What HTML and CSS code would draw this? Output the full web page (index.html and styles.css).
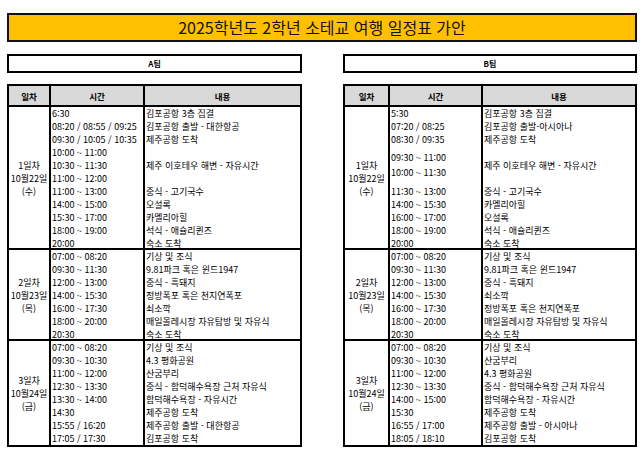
FILE: index.html
```html
<!DOCTYPE html>
<html lang="ko">
<head>
<meta charset="utf-8">
<title>2025학년도 2학년 소테교 여행 일정표 가안</title>
<link rel="stylesheet" href="styles.css">
</head>
<body>
<div class="page">
  <div class="title">2025학년도 2학년 소테교 여행 일정표 가안</div>

  <div class="teams">
    <div class="team">A팀</div>
    <div class="team">B팀</div>
  </div>

  <div class="tables">
    <!-- A team -->
    <div class="sched sched-a">
      <div class="row head">
        <div class="c-day">일차</div>
        <div class="c-time">시간</div>
        <div class="c-desc">내용</div>
      </div>
      <div class="row day">
        <div class="c-day label">1일차<br>10월22일<br>(수)</div>
        <div class="c-time lines">
          <div class="ln">6:30</div>
          <div class="ln">08:20 / 08:55 / 09:25</div>
          <div class="ln">09:30 / 10:05 / 10:35</div>
          <div class="ln">10:00 ~ 11:00</div>
          <div class="ln">10:30 ~ 11:30</div>
          <div class="ln">11:00 ~ 12:00</div>
          <div class="ln">11:00 ~ 13:00</div>
          <div class="ln">14:00 ~ 15:00</div>
          <div class="ln">15:30 ~ 17:00</div>
          <div class="ln">18:00 ~ 19:00</div>
          <div class="ln">20:00</div>
        </div>
        <div class="c-desc lines">
          <div class="ln">김포공항 3층 집결</div>
          <div class="ln">김포공항 출발 - 대한항공</div>
          <div class="ln">제주공항 도착</div>
          <div class="blk3"><div class="ln">제주 이호테우 해변 - 자유시간</div></div>
          <div class="ln">중식 - 고기국수</div>
          <div class="ln">오설록</div>
          <div class="ln">카멜리아힐</div>
          <div class="ln">석식 - 애슐리퀸즈</div>
          <div class="ln">숙소 도착</div>
        </div>
      </div>
      <div class="row day">
        <div class="c-day label">2일차<br>10월23일<br>(목)</div>
        <div class="c-time lines">
          <div class="ln">07:00 ~ 08:20</div>
          <div class="ln">09:30 ~ 11:30</div>
          <div class="ln">12:00 ~ 13:00</div>
          <div class="ln">14:00 ~ 15:30</div>
          <div class="ln">16:00 ~ 17:30</div>
          <div class="ln">18:00 ~ 20:00</div>
          <div class="ln">20:30</div>
        </div>
        <div class="c-desc lines">
          <div class="ln">기상 및 조식</div>
          <div class="ln">9.81파크 혹은 윈드1947</div>
          <div class="ln">중식 - 흑돼지</div>
          <div class="ln">정방폭포 혹은 천지연폭포</div>
          <div class="ln">쇠소깍</div>
          <div class="ln">매일올레시장 자유탐방 및 자유식</div>
          <div class="ln">숙소 도착</div>
        </div>
      </div>
      <div class="row day">
        <div class="c-day label">3일차<br>10월24일<br>(금)</div>
        <div class="c-time lines">
          <div class="ln">07:00 ~ 08:20</div>
          <div class="ln">09:30 ~ 10:30</div>
          <div class="ln">11:00 ~ 12:00</div>
          <div class="ln">12:30 ~ 13:30</div>
          <div class="ln">13:30 ~ 14:00</div>
          <div class="ln">14:30</div>
          <div class="ln">15:55 / 16:20</div>
          <div class="ln">17:05 / 17:30</div>
        </div>
        <div class="c-desc lines">
          <div class="ln">기상 및 조식</div>
          <div class="ln">4.3 평화공원</div>
          <div class="ln">산굼부리</div>
          <div class="ln">중식 - 함덕해수욕장 근처 자유식</div>
          <div class="ln">함덕해수욕장 - 자유시간</div>
          <div class="ln">제주공항 도착</div>
          <div class="ln">제주공항 출발 - 대한항공</div>
          <div class="ln">김포공항 도착</div>
        </div>
      </div>
    </div>

    <!-- B team -->
    <div class="sched sched-b">
      <div class="row head">
        <div class="c-day">일차</div>
        <div class="c-time">시간</div>
        <div class="c-desc">내용</div>
      </div>
      <div class="row day">
        <div class="c-day label">1일차<br>10월22일<br>(수)</div>
        <div class="c-time lines">
          <div class="ln">5:30</div>
          <div class="ln">07:20 / 08:25</div>
          <div class="ln">08:30 / 09:35</div>
          <div class="blk3 split">
            <div class="ln">09:30 ~ 11:00</div>
            <div class="ln">10:00 ~ 11:30</div>
          </div>
          <div class="ln">11:30 ~ 13:00</div>
          <div class="ln">14:00 ~ 15:30</div>
          <div class="ln">16:00 ~ 17:00</div>
          <div class="ln">18:00 ~ 19:00</div>
          <div class="ln">20:00</div>
        </div>
        <div class="c-desc lines">
          <div class="ln">김포공항 3층 집결</div>
          <div class="ln">김포공항 출발-아시아나</div>
          <div class="ln">제주공항 도착</div>
          <div class="blk3"><div class="ln">제주 이호테우 해변 - 자유시간</div></div>
          <div class="ln">중식 - 고기국수</div>
          <div class="ln">카멜리아힐</div>
          <div class="ln">오설록</div>
          <div class="ln">석식 - 애슐리퀸즈</div>
          <div class="ln">숙소 도착</div>
        </div>
      </div>
      <div class="row day">
        <div class="c-day label">2일차<br>10월23일<br>(목)</div>
        <div class="c-time lines">
          <div class="ln">07:00 ~ 08:20</div>
          <div class="ln">09:30 ~ 11:30</div>
          <div class="ln">12:00 ~ 13:00</div>
          <div class="ln">14:00 ~ 15:30</div>
          <div class="ln">16:00 ~ 17:30</div>
          <div class="ln">18:00 ~ 20:00</div>
          <div class="ln">20:30</div>
        </div>
        <div class="c-desc lines">
          <div class="ln">기상 및 조식</div>
          <div class="ln">9.81파크 혹은 윈드1947</div>
          <div class="ln">중식 - 흑돼지</div>
          <div class="ln">쇠소깍</div>
          <div class="ln">정방폭포 혹은 천지연폭포</div>
          <div class="ln">매일올레시장 자유탐방 및 자유식</div>
          <div class="ln">숙소 도착</div>
        </div>
      </div>
      <div class="row day">
        <div class="c-day label">3일차<br>10월24일<br>(금)</div>
        <div class="c-time lines">
          <div class="ln">07:00 ~ 08:20</div>
          <div class="ln">09:30 ~ 10:30</div>
          <div class="ln">11:00 ~ 12:00</div>
          <div class="ln">12:30 ~ 13:30</div>
          <div class="ln">14:00 ~ 15:00</div>
          <div class="ln">15:30</div>
          <div class="ln">16:55 / 17:00</div>
          <div class="ln">18:05 / 18:10</div>
        </div>
        <div class="c-desc lines">
          <div class="ln">기상 및 조식</div>
          <div class="ln">산굼부리</div>
          <div class="ln">4.3 평화공원</div>
          <div class="ln">중식 - 함덕해수욕장 근처 자유식</div>
          <div class="ln">함덕해수욕장 - 자유시간</div>
          <div class="ln">제주공항 도착</div>
          <div class="ln">제주공항 출발 - 아시아나</div>
          <div class="ln">김포공항 도착</div>
        </div>
      </div>
    </div>
  </div>
</div>
</body>
</html>
```

FILE: styles.css
```css
* { box-sizing: border-box; }

html, body {
  margin: 0;
  padding: 0;
  background: #fff;
}

body {
  font-family: "Noto Sans CJK KR", "Noto Sans", sans-serif;
  color: #000;
}

.page {
  padding: 13px 6px 0 7px;
  width: 643px;
}

.title {
  height: 29px;
  background: #ffc000;
  border: 2px solid #111;
  font-size: 16px;
  line-height: 25px;
  text-align: center;
  color: #111;
}

.teams,
.tables {
  display: grid;
  grid-template-columns: 295px 294px;
  column-gap: 41px;
}

.teams {
  margin-top: 12px;
}

.team {
  height: 19px;
  border: 2px solid #000;
  font-size: 8px;
  font-weight: 700;
  line-height: 15px;
  text-align: center;
}

.tables {
  margin-top: 11px;
  align-items: start;
}

.sched {
  border: 2px solid #000;
  font-size: 9px;
}

.sched-a { --cols: 40px 94px 1fr; }
.sched-b { --cols: 43px 93px 1fr; }

.row {
  display: grid;
  grid-template-columns: var(--cols);
}

.c-time,
.c-desc {
  border-left: 2px solid #000;
}

.head {
  height: 21px;
  background: #d9d9d9;
  border-bottom: 2px solid #000;
  font-weight: 700;
  font-size: 8.5px;
}

.head > div {
  display: flex;
  align-items: center;
  justify-content: center;
}

.day + .day {
  border-top: 2px solid #000;
  margin-top: -2px;
  position: relative;
}

.label {
  display: flex;
  align-items: center;
  justify-content: center;
  text-align: center;
  line-height: 13px;
  font-size: 9px;
}

.lines {
  padding-left: 1px;
}

.ln {
  height: 13px;
  line-height: 13px;
  white-space: nowrap;
}

.blk3 {
  height: 39px;
  display: flex;
  flex-direction: column;
  justify-content: center;
}

.blk3.split .ln {
  height: 14.5px;
  line-height: 14.5px;
}
```
